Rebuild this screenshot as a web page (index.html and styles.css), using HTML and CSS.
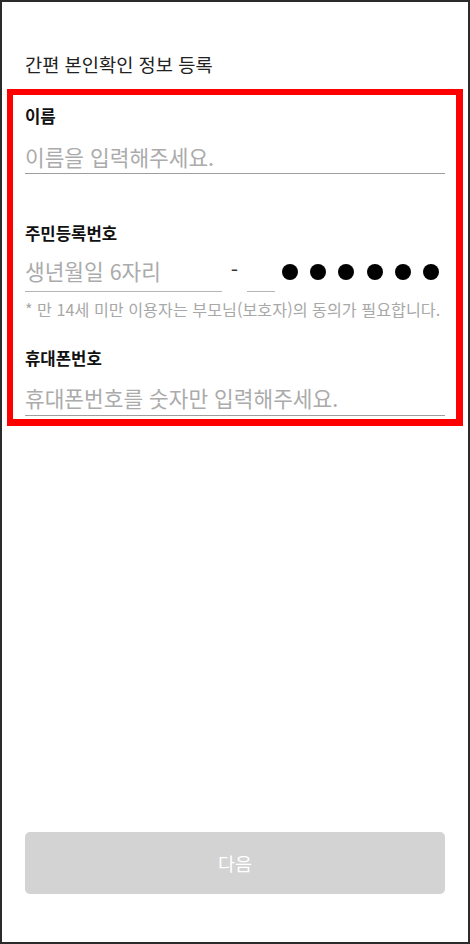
FILE: index.html
```html
<!DOCTYPE html>
<html lang="ko">
<head>
<meta charset="utf-8">
<title>간편 본인확인 정보 등록</title>
<link rel="stylesheet" href="styles.css">
</head>
<body>
<div class="frame">
  <h1 class="title">간편 본인확인 정보 등록</h1>
  <form class="form-box">
    <div class="field">
      <label class="label" for="name">이름</label>
      <input class="input" id="name" type="text" placeholder="이름을 입력해주세요.">
    </div>
    <div class="field field-rrn">
      <label class="label" for="birth">주민등록번호</label>
      <div class="rrn-row">
        <input class="input input-birth" id="birth" type="text" placeholder="생년월일 6자리">
        <span class="dash">-</span>
        <input class="input input-gender" type="text" aria-label="주민등록번호 뒷자리 첫번째">
        <span class="dots">
          <span class="dot"></span><span class="dot"></span><span class="dot"></span><span class="dot"></span><span class="dot"></span><span class="dot"></span>
        </span>
      </div>
      <p class="note">* 만 14세 미만 이용자는 부모님(보호자)의 동의가 필요합니다.</p>
    </div>
    <div class="field field-phone">
      <label class="label" for="phone">휴대폰번호</label>
      <input class="input input-phone" id="phone" type="text" placeholder="휴대폰번호를 숫자만 입력해주세요.">
    </div>
  </form>
  <div class="spacer"></div>
  <button class="next-btn" type="button">다음</button>
</div>
</body>
</html>
```
FILE: styles.css
```css
* { box-sizing: border-box; }
html, body { margin: 0; padding: 0; }
body {
  font-family: "Noto Sans CJK KR", "Noto Sans", sans-serif;
  background: #ffffff;
}
.frame {
  width: 470px;
  height: 944px;
  border: 2px solid #2b2b2b;
  display: flex;
  flex-direction: column;
  padding-top: 48px;
  background: #fff;
}
.title {
  margin: 0 0 11px 23px;
  font-size: 18.7px;
  line-height: 28px;
  font-weight: 400;
  color: #222;
}
.form-box {
  margin: 0 5px;
  border: 6px solid #ff0000;
  border-right-width: 7px;
  border-bottom-width: 7px;
  padding: 10px 11px 3px 12px;
  display: flex;
  flex-direction: column;
}
.field { display: flex; flex-direction: column; }
.label {
  font-size: 16.7px;
  line-height: 22px;
  font-weight: 700;
  color: #111;
}
.input {
  display: block;
  width: 100%;
  height: 33px;
  margin-top: 14px;
  padding: 0 0 2px 0;
  border: none;
  border-bottom: 1px solid #9e9e9e;
  font-family: inherit;
  font-size: 21.4px;
  color: #333;
  background: transparent;
  outline: none;
}
.input::placeholder { color: #ababab; }
.field-rrn { margin-top: 48px; }
.rrn-row {
  display: flex;
  align-items: flex-end;
  margin-top: 10px;
}
.input-birth {
  width: 197px;
  height: 38px;
  margin-top: 0;
  padding-bottom: 4px;
  border-bottom-color: #b5b5b5;
}
.dash {
  width: 25px;
  height: 38px;
  text-align: center;
  font-size: 21px;
  line-height: 30px;
  color: #333;
}
.input-gender {
  width: 28px;
  height: 38px;
  margin-top: 0;
  border-bottom-color: #b5b5b5;
}
.dots {
  display: flex;
  gap: 12.2px;
  margin-left: 7px;
  height: 38px;
  padding-top: 10px;
}
.dot {
  width: 16px;
  height: 16px;
  border-radius: 50%;
  background: #000;
}
.note {
  margin: 7px 0 0 0;
  font-size: 16.2px;
  line-height: 20px;
  color: #a8a8a8;
  white-space: nowrap;
}
.field-phone { margin-top: 28px; }
.input-phone { margin-top: 13px; height: 34px; }
.spacer { flex: 1; }
.next-btn {
  margin: 0 23px 48px 23px;
  height: 62px;
  border: none;
  border-radius: 5px;
  background: #d3d3d3;
  color: #fff;
  font-family: inherit;
  font-size: 18.5px;
}
```
